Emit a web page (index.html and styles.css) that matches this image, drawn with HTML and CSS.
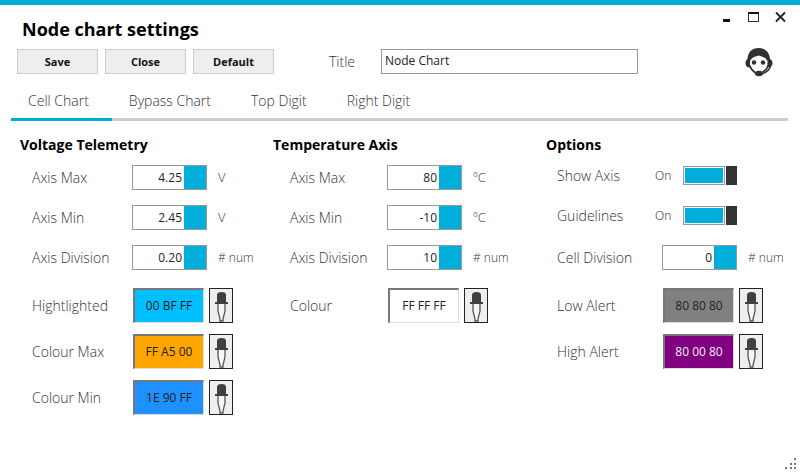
FILE: index.html
```html
<!doctype html>
<html lang="en">
<head>
    <meta charset="UTF-8" />
    <title>Node chart settings</title>
    <link rel="stylesheet" href="styles.css">
</head>
<body>
    <svg width="0" height="0" class="iconDefs" aria-hidden="true">
        <symbol id="dropper" viewBox="0 0 22 33">
            <path d="M8 15v7l2 8v2h3v-2l2-8v-7" fill="#f6f6f6" stroke="#555" stroke-width="1.300"/>
            <path d="M7 13V6q0-3 4.500-3T16 6v7h2v2H5v-2z" fill="#404040"/>
        </symbol>
    </svg>
    <div id="window">
        <header id="titleBar">
            <h1>Node chart settings</h1>
            <div id="windowButtons">
                <button type="button" aria-label="Minimize"><svg width="14" height="14"><path d="M3 11.500h7" stroke="#111" stroke-width="3"/></svg></button>
                <button type="button" aria-label="Maximize"><svg width="14" height="14"><rect x="1.500" y="3.500" width="10" height="9" fill="none" stroke="#333"/><path d="M1 4h11" stroke="#111" stroke-width="2"/></svg></button>
                <button type="button" aria-label="Close window"><svg width="14" height="14"><path d="M2 3.500l9 9M11 3.500l-9 9" stroke="#222" stroke-width="1.800"/></svg></button>
            </div>
        </header>
        <div id="toolbar">
            <button type="button" class="btn">Save</button>
            <button type="button" class="btn">Close</button>
            <button type="button" class="btn">Default</button>
            <label for="titleInput">Title</label>
            <input type="text" id="titleInput" value="Node Chart"/>
            <button type="button" id="helpBtn" aria-label="Support">
                <svg width="28" height="30" viewBox="0 0 28 30">
                    <path d="M2.500 13C2.500 5 7 1 13.500 1S25 5 25 13l-3 .500q-1-3-4-3.500l-4-1.500-5 1.500q-3 1-3.500 3.500z" fill="#303030"/>
                    <path d="M3.500 11.500q-3 1-3 4.500t3 4.500l1.500-.500v-8zM24 11.500q3.500 1 3.500 4.500T24 20.500l-1.500-.500v-8z" fill="#303030"/>
                    <path d="M4.500 18.500q2 5 6 7.500" fill="none" stroke="#303030" stroke-width="2"/>
                    <path d="M23 18q-1 5-5.500 7" fill="none" stroke="#303030" stroke-width="1.500"/>
                    <path d="M25.500 19q-1.500 6-9.500 8" fill="none" stroke="#303030" stroke-width="1.500"/>
                    <circle cx="9" cy="15.500" r="2.200" fill="#303030"/>
                    <circle cx="18" cy="15.500" r="2.200" fill="#303030"/>
                    <ellipse cx="14" cy="26.500" rx="4" ry="2.800" fill="#303030"/>
                </svg>
            </button>
        </div>
        <nav id="tabs">
            <a href="#cell" class="active">Cell Chart</a>
            <a href="#bypass">Bypass Chart</a>
            <a href="#top">Top Digit</a>
            <a href="#right">Right Digit</a>
        </nav>
        <main id="cell">
            <section class="voltage">
                <h2>Voltage Telemetry</h2>
                <div class="row">
                    <label for="vMax">Axis Max</label>
                    <div class="spinner"><input type="text" id="vMax" value="4.25"/><button type="button" aria-label="Change"></button></div>
                    <span class="unit">V</span>
                </div>
                <div class="row">
                    <label for="vMin">Axis Min</label>
                    <div class="spinner"><input type="text" id="vMin" value="2.45"/><button type="button" aria-label="Change"></button></div>
                    <span class="unit">V</span>
                </div>
                <div class="row">
                    <label for="vDiv">Axis Division</label>
                    <div class="spinner"><input type="text" id="vDiv" value="0.20"/><button type="button" aria-label="Change"></button></div>
                    <span class="unit num"># num</span>
                </div>
                <div class="colours">
                    <div class="row">
                        <label for="colHigh">Hightlighted</label>
                        <input type="text" class="swatch skyBlue" id="colHigh" value="00 BF FF"/>
                        <button type="button" class="picker" aria-label="Pick colour"><svg><use href="#dropper"/></svg></button>
                    </div>
                    <div class="row">
                        <label for="colMax">Colour Max</label>
                        <input type="text" class="swatch orange" id="colMax" value="FF A5 00"/>
                        <button type="button" class="picker" aria-label="Pick colour"><svg><use href="#dropper"/></svg></button>
                    </div>
                    <div class="row">
                        <label for="colMin">Colour Min</label>
                        <input type="text" class="swatch blue" id="colMin" value="1E 90 FF"/>
                        <button type="button" class="picker" aria-label="Pick colour"><svg><use href="#dropper"/></svg></button>
                    </div>
                </div>
            </section>
            <section class="temperature">
                <h2>Temperature Axis</h2>
                <div class="row">
                    <label for="tMax">Axis Max</label>
                    <div class="spinner"><input type="text" id="tMax" value="80"/><button type="button" aria-label="Change"></button></div>
                    <span class="unit">ºC</span>
                </div>
                <div class="row">
                    <label for="tMin">Axis Min</label>
                    <div class="spinner"><input type="text" id="tMin" value="-10"/><button type="button" aria-label="Change"></button></div>
                    <span class="unit">ºC</span>
                </div>
                <div class="row">
                    <label for="tDiv">Axis Division</label>
                    <div class="spinner"><input type="text" id="tDiv" value="10"/><button type="button" aria-label="Change"></button></div>
                    <span class="unit num"># num</span>
                </div>
                <div class="colours">
                    <div class="row">
                        <label for="colTemp">Colour</label>
                        <input type="text" class="swatch" id="colTemp" value="FF FF FF"/>
                        <button type="button" class="picker" aria-label="Pick colour"><svg><use href="#dropper"/></svg></button>
                    </div>
                </div>
            </section>
            <section class="options">
                <h2>Options</h2>
                <div class="row toggleRow">
                    <label for="showAxis">Show Axis</label>
                    <span class="state">On</span>
                    <input type="checkbox" class="toggle" id="showAxis" checked/>
                </div>
                <div class="row toggleRow">
                    <label for="guidelines">Guidelines</label>
                    <span class="state">On</span>
                    <input type="checkbox" class="toggle" id="guidelines" checked/>
                </div>
                <div class="row">
                    <label for="cellDiv">Cell Division</label>
                    <div class="spinner"><input type="text" id="cellDiv" value="0"/><button type="button" aria-label="Change"></button></div>
                    <span class="unit num"># num</span>
                </div>
                <div class="colours">
                    <div class="row">
                        <label for="lowAlert">Low Alert</label>
                        <input type="text" class="swatch grey" id="lowAlert" value="80 80 80"/>
                        <button type="button" class="picker" aria-label="Pick colour"><svg><use href="#dropper"/></svg></button>
                    </div>
                    <div class="row">
                        <label for="highAlert">High Alert</label>
                        <input type="text" class="swatch purple" id="highAlert" value="80 00 80"/>
                        <button type="button" class="picker" aria-label="Pick colour"><svg><use href="#dropper"/></svg></button>
                    </div>
                </div>
            </section>
        </main>
        <footer>
            <svg width="12" height="12" fill="#777"><path d="M9 0h2v2H9zM9 5h2v2H9zM5 5h2v2H5zM9 9h2v2H9zM5 9h2v2H5zM0 9h2v2H0z"/></svg>
        </footer>
    </div>
</body>
</html>
```
FILE: styles.css
```css
* {
    box-sizing: border-box;
}
body {
    margin: 0;
    background: #fff;
    color: #333;
    font-family: "Open Sans", "Noto Sans", sans-serif;
    font-size: 14px;
    font-weight: 300;
}
button, input {
    font-family: inherit;
    margin: 0;
    padding: 0;
    border: none;
}
button {
    background: none;
}
label, h1, h2, .unit, .state, #tabs a {
    white-space: nowrap;
}
.iconDefs {
    position: absolute;
}
#window {
    min-height: 100vh;
    display: flex;
    flex-direction: column;
    border-top: 5px solid #00aedb;
}
#titleBar {
    display: flex;
    justify-content: space-between;
    padding: 4px 12px 0 22px;
    height: 44px;
}
#titleBar h1 {
    margin: 0;
    font-size: 18px;
    font-weight: 700;
    line-height: 40px;
    color: #000;
}
#windowButtons {
    display: flex;
    align-items: flex-start;
    gap: 13px;
}
#windowButtons button {
    width: 14px;
    height: 14px;
}
#windowButtons svg, #helpBtn svg, footer svg {
    display: block;
}
#toolbar {
    display: flex;
    align-items: center;
    height: 25px;
    padding: 0 27px 0 17px;
}
.btn {
    width: 81px;
    height: 25px;
    margin-right: 7px;
    background: #eee;
    border: 1px solid #ccc;
    color: #111;
    font-size: 11px;
    font-weight: 700;
}
#toolbar label {
    width: 52px;
    margin-left: 48px;
}
#titleInput {
    width: 257px;
    height: 25px;
    padding: 0 3px 2px;
    border: 1px solid #999;
    color: #222;
    font-size: 12px;
}
#helpBtn {
    margin-left: auto;
}
#tabs {
    display: flex;
    margin: 10px 12px 0 11px;
    border-bottom: 3px solid #ccc;
}
#tabs a {
    height: 37px;
    margin-bottom: -3px;
    padding: 0 23px 0 17px;
    border-bottom: 3px solid transparent;
    color: #333;
    line-height: 34px;
    text-decoration: none;
}
#tabs a.active {
    border-color: #00aedb;
}
main {
    display: grid;
    grid-template-columns: 253fr 273fr 254fr;
    padding: 12px 0 0 20px;
}
section h2 {
    margin: 0;
    font-size: 14px;
    font-weight: 700;
    line-height: 24px;
    color: #000;
}
.row {
    display: flex;
    align-items: center;
    height: 40px;
    padding-left: 12px;
}
.row label {
    width: 100px;
}
.temperature .row {
    padding-left: 17px;
}
.temperature .row label {
    width: 97px;
}
.options .row {
    padding-left: 11px;
}
.options .row label {
    width: 105px;
}
.spinner {
    display: flex;
    width: 75px;
    height: 25px;
    border: 1px solid #999;
}
.spinner input {
    flex: 1;
    min-width: 0;
    padding-right: 2px;
    text-align: right;
    color: #222;
    font-size: 12px;
}
.spinner button {
    width: 22px;
    background: #00aedb;
}
.unit {
    margin-left: 11px;
    font-size: 13px;
}
.unit.num {
    font-size: 12px;
}
.options .row.toggleRow {
    height: 36px;
    margin-bottom: 4px;
}
.options .toggleRow label {
    width: 98px;
}
.state {
    width: 28px;
    color: #222;
    font-size: 12px;
}
.toggle {
    appearance: none;
    display: flex;
    gap: 1px;
    width: 54px;
    height: 19px;
}
.toggle::before {
    content: "";
    flex: 1;
    border: 1px solid #999;
    padding: 1px;
    background: #00aedb content-box;
}
.toggle::after {
    content: "";
    width: 11px;
    background: #333;
}
.colours {
    padding-top: 5px;
}
.colours .row {
    height: 46px;
}
.swatch {
    width: 71px;
    height: 35px;
    margin: 0 5px 0 1px;
    border: 1px solid #ddd;
    border-top: 2px solid #777;
    border-left: 2px solid #777;
    background: #fff;
    color: #222;
    font-size: 12px;
    text-align: center;
}
.skyBlue {
    background: #00bfff;
}
.orange {
    background: #ffa500;
}
.blue {
    background: #1e90ff;
}
.grey {
    background: #808080;
}
.purple {
    background: #800080;
    color: #eee;
}
.picker {
    width: 24px;
    height: 35px;
    background: #eee;
    border: 1px solid #222;
}
.picker svg {
    display: block;
    width: 22px;
    height: 33px;
}
footer {
    display: flex;
    justify-content: flex-end;
    margin-top: auto;
    padding: 0 3px 3px 0;
}
```
